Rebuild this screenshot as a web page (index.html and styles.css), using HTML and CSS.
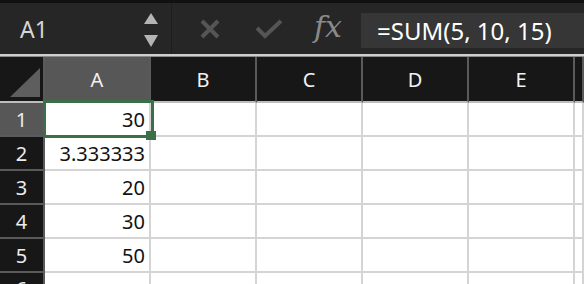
FILE: index.html
```html
<!DOCTYPE html>
<html lang="en">
<head>
    <meta charset="UTF-8">
    <title>Sheet</title>
    <link rel="stylesheet" href="styles.css">
</head>
<body>
    <div class="app">
        <div class="topstrip"></div>

        <div class="toolbar">
            <div class="namebox">
                <span class="cellref">A1</span>
                <svg class="spinner" width="16" height="38" viewBox="0 0 16 38">
                    <polygon points="1,12 15,12 8,1" fill="#b4b4b4"/>
                    <polygon points="1,23 15,23 8,35" fill="#b4b4b4"/>
                </svg>
            </div>
            <div class="actions">
                <svg class="icon" width="22" height="22" viewBox="0 0 22 22">
                    <path d="M3 3 L19 19 M19 3 L3 19" stroke="#555" stroke-width="4"/>
                </svg>
                <svg class="icon" width="28" height="22" viewBox="0 0 28 22">
                    <path d="M2 10 L10 18 L26 3" stroke="#555" stroke-width="4" fill="none"/>
                </svg>
                <span class="fx">fx</span>
            </div>
            <div class="formula">=SUM(5, 10, 15)</div>
        </div>

        <div class="divider"></div>

        <div class="sheet">
            <div class="corner">
                <svg width="30" height="29" viewBox="0 0 30 29"><polygon points="30,0 30,29 0,29" fill="#5e5e5e"/></svg>
            </div>
            <div class="colhead active">A</div>
            <div class="colhead">B</div>
            <div class="colhead">C</div>
            <div class="colhead">D</div>
            <div class="colhead">E</div>
            <div class="colhead"></div>

            <div class="rowhead active">1</div>
            <div class="cell">30</div><div class="cell"></div><div class="cell"></div><div class="cell"></div><div class="cell"></div><div class="cell"></div>

            <div class="rowhead">2</div>
            <div class="cell">3.333333</div><div class="cell"></div><div class="cell"></div><div class="cell"></div><div class="cell"></div><div class="cell"></div>

            <div class="rowhead">3</div>
            <div class="cell">20</div><div class="cell"></div><div class="cell"></div><div class="cell"></div><div class="cell"></div><div class="cell"></div>

            <div class="rowhead">4</div>
            <div class="cell">30</div><div class="cell"></div><div class="cell"></div><div class="cell"></div><div class="cell"></div><div class="cell"></div>

            <div class="rowhead">5</div>
            <div class="cell">50</div><div class="cell"></div><div class="cell"></div><div class="cell"></div><div class="cell"></div><div class="cell"></div>

            <div class="rowhead partial">6</div>
            <div class="cell"></div><div class="cell"></div><div class="cell"></div><div class="cell"></div><div class="cell"></div><div class="cell"></div>

            <!-- selection outline over A1 -->
            <div class="selection"></div>
            <div class="handle"></div>
        </div>
    </div>
</body>
</html>
```

FILE: styles.css
```css
body {
    margin: 0;
    padding: 0;
    background-color: #fff;
    font-family: "Noto Sans", "Open Sans", sans-serif;
    overflow: hidden;
}

.app {
    width: 584px;
    height: 284px;
    overflow: hidden;
}

.topstrip {
    height: 3px;
    background-color: #111;
}

/* Toolbar */
.toolbar {
    height: 51px;
    display: flex;
    align-items: center;
    background-color: #262626;
}

.namebox {
    width: 172px;
    height: 100%;
    display: flex;
    align-items: center;
    justify-content: space-between;
    padding: 0 12px 0 20px;
    box-sizing: border-box;
    border-right: 1px solid #1e1e1e;
}

.cellref {
    color: #d6d6d6;
    font-size: 23px;
}

.spinner {
    margin-top: 4px;
}

.actions {
    width: 189px;
    display: flex;
    align-items: center;
    padding-left: 27px;
    box-sizing: border-box;
}

.actions .icon {
    margin-right: 34px;
}

.actions .icon + .icon {
    margin-right: 31px;
}

.fx {
    font-family: "DejaVu Serif", "Liberation Serif", serif;
    font-style: italic;
    font-size: 30px;
    color: #8a8a8a;
    margin-top: -5px;
}

.formula {
    flex: 1;
    height: 35px;
    margin-top: 4px;
    background-color: #363636;
    color: #fff;
    font-size: 24px;
    line-height: 35px;
    padding-left: 16px;
    white-space: nowrap;
}

.divider {
    height: 3px;
    background-color: #cfcfcf;
    border-bottom: 1px solid #8a8a8a;
    box-sizing: border-box;
}

/* Sheet grid */
.sheet {
    position: relative;
    display: grid;
    grid-template-columns: 45px repeat(5, 106px) 1fr;
    grid-template-rows: 46px;
    grid-auto-rows: 34px;
}

.corner,
.colhead {
    background-color: #171717;
    border-right: 2px solid #5a5a5a;
    border-bottom: 2px solid #bdbdbd;
}

.corner {
    display: flex;
    align-items: flex-end;
    justify-content: flex-end;
    padding: 0 3px 4px 0;
}

.colhead {
    display: flex;
    align-items: center;
    justify-content: center;
    color: #f2f2f2;
    font-size: 20px;
}

.rowhead {
    background-color: #171717;
    border-right: 2px solid #5a5a5a;
    border-bottom: 2px solid #5a5a5a;
    color: #ececec;
    font-size: 20px;
    display: flex;
    align-items: center;
    justify-content: center;
}

/* last row is only partly visible, keep the number near its top */
.rowhead.partial {
    align-items: flex-start;
    line-height: 20px;
    padding-top: 6px;
}

.active {
    background-color: #575757;
}

.cell {
    border-right: 2px solid #d4d4d4;
    border-bottom: 2px solid #d4d4d4;
    color: #111;
    font-size: 20px;
    display: flex;
    align-items: center;
    justify-content: flex-end;
    padding-right: 4px;
}

.selection {
    position: absolute;
    left: 43px;
    top: 43px;
    width: 111px;
    height: 38px;
    border: 3px solid #3b6f48;
    box-sizing: border-box;
}

.handle {
    position: absolute;
    left: 146px;
    top: 74px;
    width: 10px;
    height: 9px;
    background-color: #3b6f48;
}
```
